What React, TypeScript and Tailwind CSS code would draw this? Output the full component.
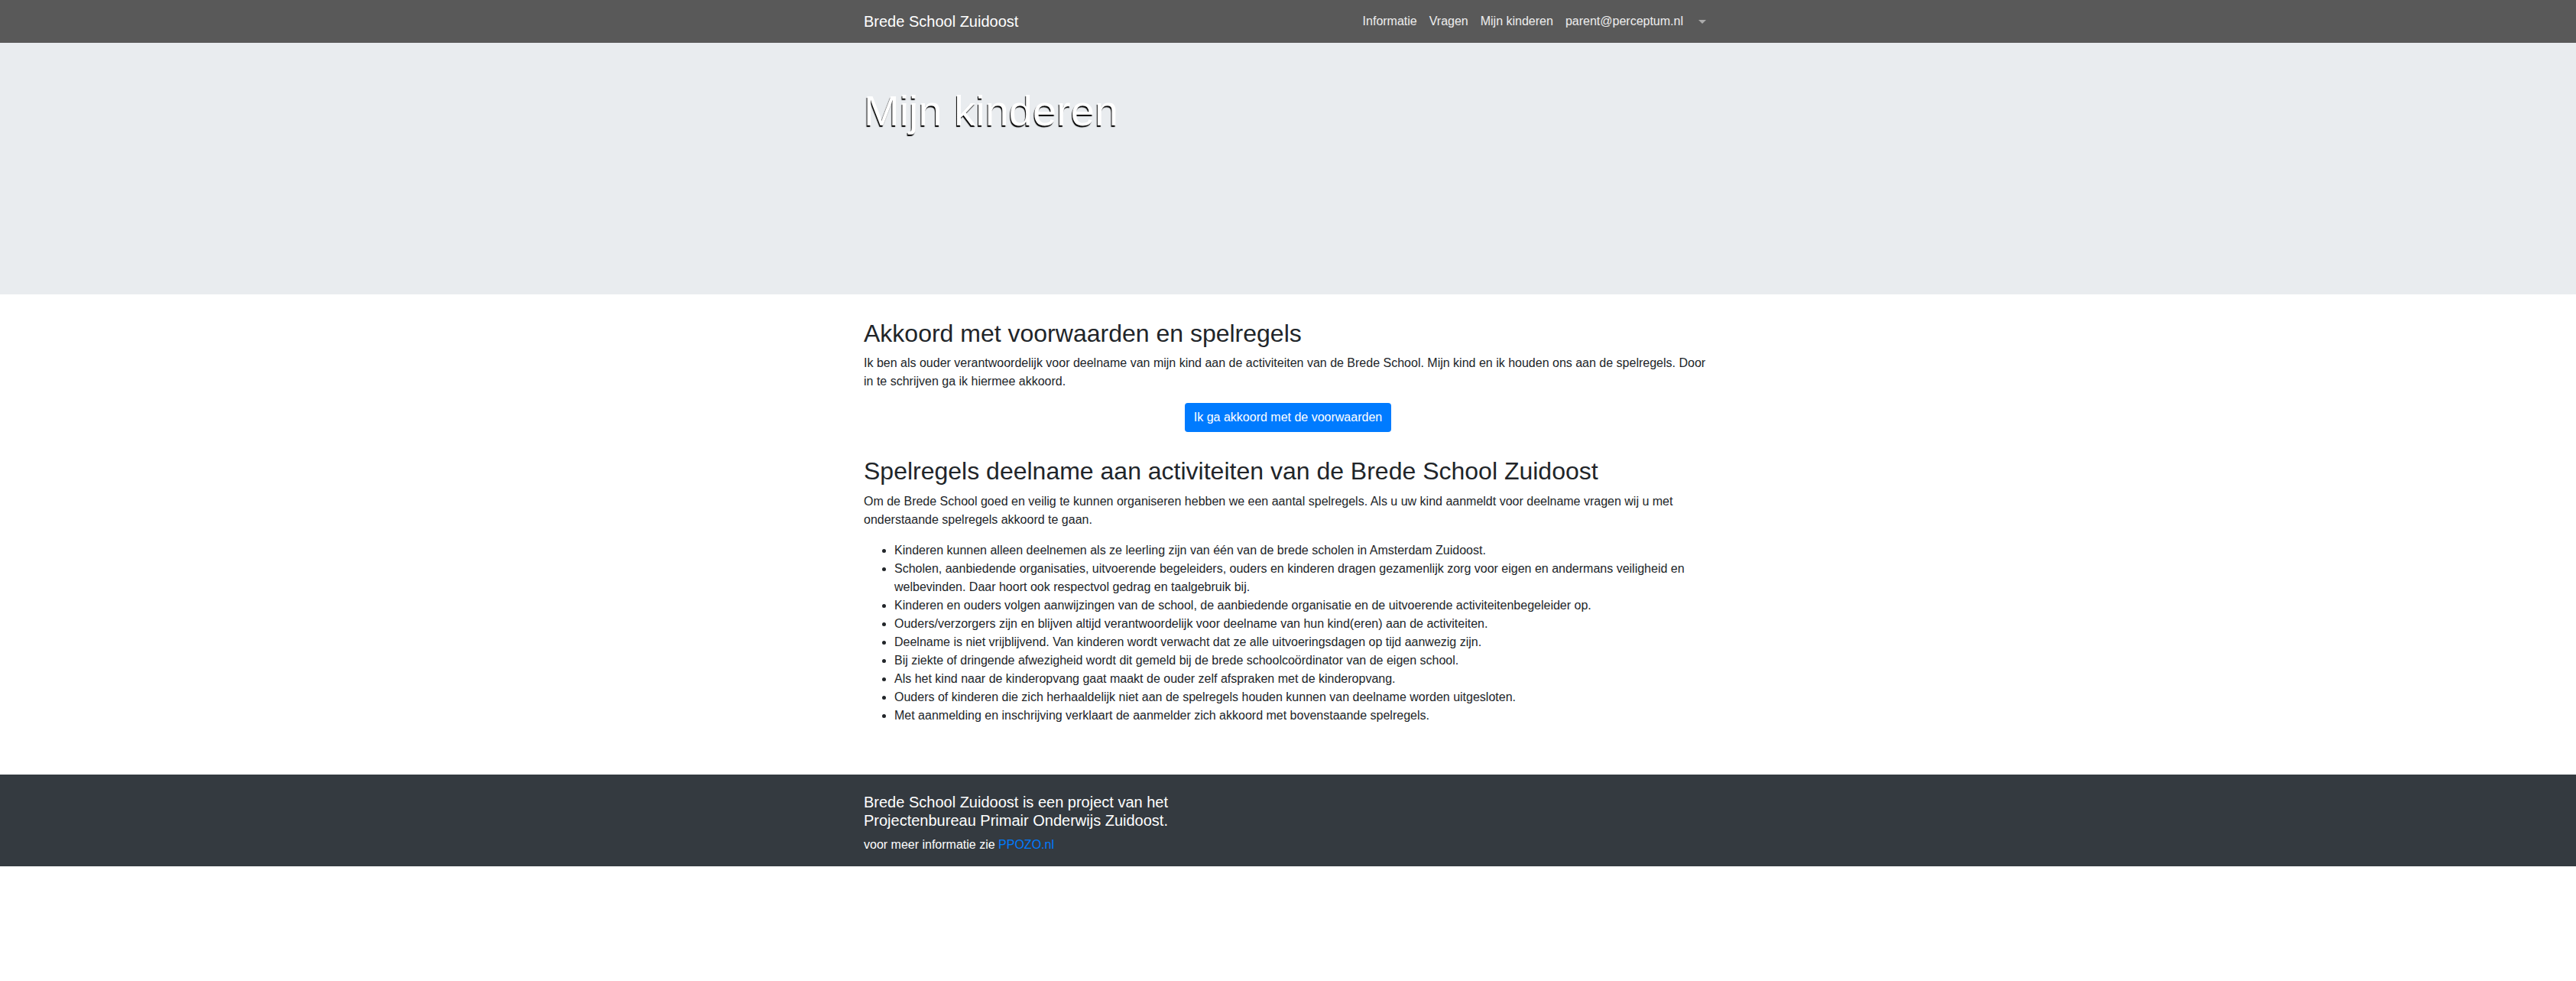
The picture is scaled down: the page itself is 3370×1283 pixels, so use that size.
const regels = [
  'Kinderen kunnen alleen deelnemen als ze leerling zijn van één van de brede scholen in Amsterdam Zuidoost.',
  'Scholen, aanbiedende organisaties, uitvoerende begeleiders, ouders en kinderen dragen gezamenlijk zorg voor eigen en andermans veiligheid en welbevinden. Daar hoort ook respectvol gedrag en taalgebruik bij.',
  'Kinderen en ouders volgen aanwijzingen van de school, de aanbiedende organisatie en de uitvoerende activiteitenbegeleider op.',
  'Ouders/verzorgers zijn en blijven altijd verantwoordelijk voor deelname van hun kind(eren) aan de activiteiten.',
  'Deelname is niet vrijblijvend. Van kinderen wordt verwacht dat ze alle uitvoeringsdagen op tijd aanwezig zijn.',
  'Bij ziekte of dringende afwezigheid wordt dit gemeld bij de brede schoolcoördinator van de eigen school.',
  'Als het kind naar de kinderopvang gaat maakt de ouder zelf afspraken met de kinderopvang.',
  'Ouders of kinderen die zich herhaaldelijk niet aan de spelregels houden kunnen van deelname worden uitgesloten.',
  'Met aanmelding en inschrijving verklaart de aanmelder zich akkoord met bovenstaande spelregels.',
]

function Navbar() {
  return (
    <nav className="h-14 bg-[#595959]">
      <div className="mx-auto flex h-full w-[1110px] items-center justify-between">
        <a className="text-[20px] leading-[30px] text-white">Brede School Zuidoost</a>
        <ul className="flex items-center text-[16px] leading-6 text-white/90">
          <li className="px-2">Informatie</li>
          <li className="px-2">Vragen</li>
          <li className="px-2">Mijn kinderen</li>
          <li className="px-2">parent@perceptum.nl</li>
          <li className="flex items-center px-2 py-2">
            <span className="ml-1 h-0 w-0 border-x-[5px] border-t-[5px] border-x-transparent border-t-white/50" />
          </li>
        </ul>
      </div>
    </nav>
  )
}

export default function App() {
  return (
    <div className="min-h-[1283px] bg-white font-['Liberation_Sans',Arial,sans-serif] text-[16px] leading-6 text-[#212529]">
      <Navbar />

      <header className="h-[329px] bg-[#e9ecef] pt-[55px]">
        <div className="mx-auto w-[1110px]">
          <h1 className="text-[56px] leading-[1.2] text-white [text-shadow:-1px_2px_1px_#000]">Mijn kinderen</h1>
        </div>
      </header>

      <main className="mx-auto w-[1110px] pb-4">
        <h2 className="mt-8 mb-2 text-[32px] leading-[1.2] font-medium">Akkoord met voorwaarden en spelregels</h2>
        <p className="mb-4">
          Ik ben als ouder verantwoordelijk voor deelname van mijn kind aan de activiteiten van de Brede School. Mijn kind
          en ik houden ons aan de spelregels. Door in te schrijven ga ik hiermee akkoord.
        </p>
        <div className="flex justify-center">
          <button className="h-[38px] rounded-[4px] bg-[#007bff] px-3 text-[16px] leading-6 text-white">
            Ik ga akkoord met de voorwaarden
          </button>
        </div>

        <h2 className="mt-8 mb-2 text-[32px] leading-[1.2] font-medium">
          Spelregels deelname aan activiteiten van de Brede School Zuidoost
        </h2>
        <p className="mb-4">
          Om de Brede School goed en veilig te kunnen organiseren hebben we een aantal spelregels. Als u uw kind aanmeldt
          voor deelname vragen wij u met onderstaande spelregels akkoord te gaan.
        </p>
        <ul className="list-disc pl-10">
          {regels.map((r) => (
            <li key={r}>{r}</li>
          ))}
        </ul>
      </main>

      <footer className="mt-[49px] h-[120px] bg-[#343a40] pt-6 text-white">
        <div className="mx-auto w-[1110px]">
          <h5 className="mb-2 w-[420px] text-[20px] leading-[1.2]">
            Brede School Zuidoost is een project van het Projectenbureau Primair Onderwijs Zuidoost.
          </h5>
          <p>
            voor meer informatie zie <a className="text-[#007bff]">PPOZO.nl</a>
          </p>
        </div>
      </footer>
    </div>
  )
}
